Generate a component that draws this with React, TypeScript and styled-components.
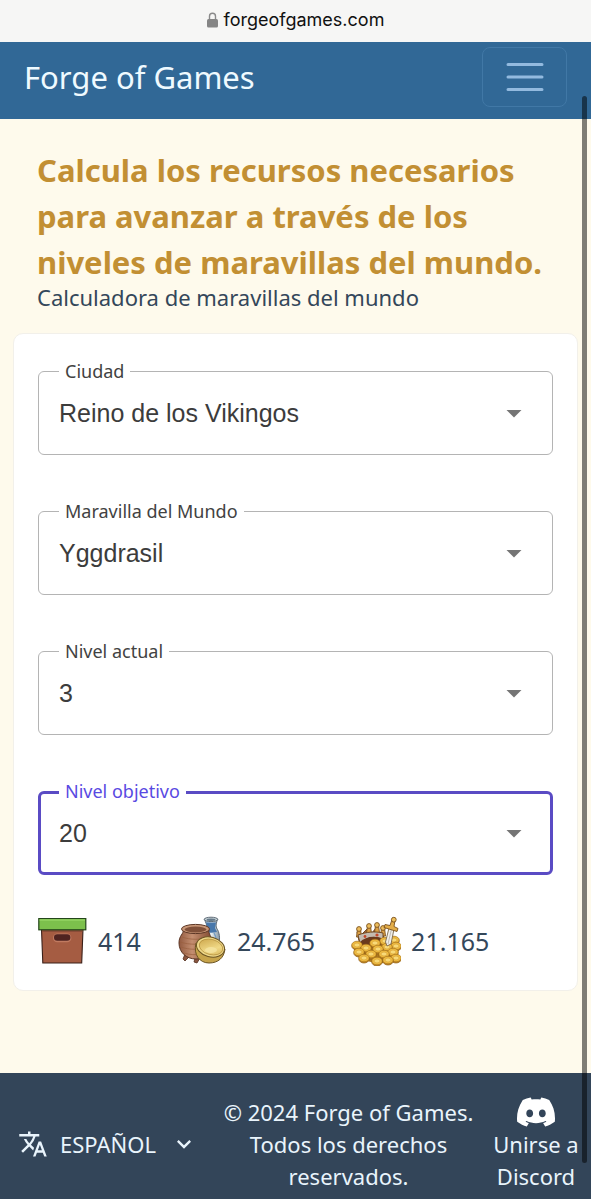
import React from "react";
import styled, { createGlobalStyle } from "styled-components";
import { MdArrowDropDown, MdExpandMore, MdTranslate } from "react-icons/md";
import { SiDiscord } from "react-icons/si";

const GlobalStyle = createGlobalStyle`
  *, *::before, *::after { box-sizing: border-box; }
  body {
    margin: 0;
    background: #fefaec;
    color: #34475a;
    font-family: "Noto Sans", sans-serif;
  }
`;

const Page = styled.div`
  min-height: 100vh;
  display: flex;
  flex-direction: column;
`;

const AddressBar = styled.div`
  height: 42px;
  display: flex;
  align-items: center;
  justify-content: center;
  gap: 6px;
  padding-bottom: 2px;
  background: #f6f6f5;
  color: #101010;
  font: 400 18px/24px Inter, sans-serif;
`;

const Navbar = styled.header`
  display: flex;
  align-items: center;
  justify-content: space-between;
  padding: 5px 24px 12px;
  background: #316896;
`;

const Brand = styled.a`
  color: #effaff;
  font-size: 31px;
  line-height: 44px;
  text-decoration: none;
`;

const Toggler = styled.button`
  display: grid;
  place-items: center;
  width: 85px;
  height: 60px;
  padding: 0;
  border: 1px solid #4178a6;
  border-radius: 8px;
  background: transparent;
  color: #93badf;
`;

const Main = styled.main`
  flex: 1;
  padding: 28px 13px;
`;

const Intro = styled.div`
  padding: 0 24px;
`;

const Title = styled.h1`
  margin: 0;
  color: #c28f33;
  font-size: 31px;
  line-height: 46px;
  font-weight: 700;
`;

const Subtitle = styled.p`
  margin: 0;
  font-size: 22px;
  line-height: 24px;
`;

const Card = styled.section`
  margin-top: 24px;
  padding: 37px 24px 24px;
  border: 1px solid #f2f0ea;
  border-radius: 10px;
  background: #fff;
`;

const Fields = styled.form`
  display: grid;
  gap: 56px;
`;

const Field = styled.div<{ $active?: boolean }>`
  position: relative;
  height: 84px;
  color: ${(p) => (p.$active ? "#594ae2" : "#424242")};

  &::after {
    content: "";
    position: absolute;
    inset: 0;
    border: ${(p) => (p.$active ? "3px solid #5a4bc4" : "1px solid #b4b4b4")};
    border-radius: 6px;
    pointer-events: none;
  }
`;

const FieldLabel = styled.label`
  position: absolute;
  z-index: 1;
  top: -12px;
  left: 21px;
  padding: 0 6px;
  background: #fff;
  font-size: 18px;
  line-height: 24px;
`;

const Select = styled.select`
  appearance: none;
  width: 100%;
  height: 100%;
  padding: 0 60px 0 21px;
  border: 0;
  outline: 0;
  background: transparent;
  color: #3c3c3c;
  font: 400 25px/32px "Liberation Sans", sans-serif;
`;

const Arrow = styled(MdArrowDropDown)`
  position: absolute;
  top: 24px;
  right: 21px;
  color: #757575;
  pointer-events: none;
`;

const Resources = styled.ul`
  display: flex;
  flex-wrap: wrap;
  gap: 16px 36px;
  margin: 41px 0 0;
  padding: 0;
  list-style: none;
`;

const Resource = styled.li`
  display: flex;
  align-items: center;
  gap: 10px;
  font-size: 25px;
  line-height: 32px;
`;

const Footer = styled.footer`
  display: flex;
  align-items: center;
  padding: 23px 10px 7px;
  background: #334559;
  color: #e9f4fc;
  font-size: 22px;
  line-height: 32px;
`;

const LanguageButton = styled.button`
  display: flex;
  align-items: center;
  gap: 12px;
  padding: 0 8px;
  border: 0;
  background: transparent;
  color: inherit;
  font: inherit;
  text-transform: uppercase;
`;

const Chevron = styled(MdExpandMore)`
  margin-left: 2px;
`;

const Copyright = styled.p`
  flex: 1;
  margin: 0;
  padding: 0 10px;
  text-align: center;
`;

const DiscordLink = styled.a`
  width: 90px;
  color: inherit;
  text-align: center;
  text-decoration: none;

  svg {
    display: block;
    margin: -3px auto;
    color: #fff;
  }
`;

const ScrollThumb = styled.div`
  position: fixed;
  z-index: 2;
  top: 96px;
  right: 4px;
  bottom: 36px;
  width: 5px;
  border-radius: 3px;
  background: rgba(0, 0, 0, 0.5);
`;

const LockIcon = () => (
  <svg width="11" height="16" viewBox="0 0 11 16" aria-hidden="true">
    <path d="M2.5 8V4.200a3 3 0 0 1 6 0V8" fill="none" stroke="#8a8a8a" strokeWidth="1.400" />
    <rect y="7" width="11" height="8.500" rx="1.500" fill="#858585" />
  </svg>
);

const MenuIcon = () => (
  <svg width="38" height="30" viewBox="0 0 38 30" aria-hidden="true">
    <path d="M2 2.500h34M2 15h34M2 27.500h34" stroke="currentColor" strokeWidth="3" strokeLinecap="round" />
  </svg>
);

const CrateIcon = () => (
  <svg width="50" height="50" viewBox="0 0 50 50" aria-hidden="true">
    <path d="M3.500 13h41.500l-1.300 34H4.800z" fill="#a55c42" stroke="#3a2019" strokeWidth="1.100" />
    <path d="M4.200 14h40.200v2H4.200z" fill="#8a4c38" />
    <rect x=".8" y="2.600" width="47" height="11.200" fill="#7cc04c" stroke="#23451a" strokeWidth="1.200" />
    <path d="M1.600 4h45.400" stroke="#94d463" strokeWidth="1.400" />
    <rect x="15" y="17.600" width="18.400" height="8.600" rx="4.300" fill="#c07a60" />
    <rect x="16" y="18.200" width="16.400" height="6.600" rx="3.300" fill="#4f2320" />
  </svg>
);

const PotteryIcon = () => (
  <svg width="50" height="50" viewBox="0 0 50 50" aria-hidden="true">
    <defs>
      <linearGradient id="clay" x1="0" x2="1">
        <stop offset="0" stopColor="#935a40" />
        <stop offset=".4" stopColor="#c48e70" />
        <stop offset="1" stopColor="#80492f" />
      </linearGradient>
      <linearGradient id="glaze" x1="0" x2="1">
        <stop offset="0" stopColor="#7fa3c4" />
        <stop offset=".5" stopColor="#e6eef0" />
        <stop offset="1" stopColor="#8496a4" />
      </linearGradient>
      <linearGradient id="brass" x1="0" y1="0" x2="1" y2="1">
        <stop offset="0" stopColor="#c9a145" />
        <stop offset=".6" stopColor="#f0d987" />
        <stop offset="1" stopColor="#d5b256" />
      </linearGradient>
    </defs>
    <path d="M27.500 3c1 4 3 6 2 9-2 4-4 8-3 17l15 1c2-8 1-14-2-18-1-3 0-5 1-9z" fill="url(#glaze)" stroke="#52606c" strokeWidth=".9" />
    <path d="M29 6.500h10l-1 5.500 2 4c-4 1-8 1-11 0l1.500-4z" fill="#4777ab" />
    <path d="M31 18c-1 3-1 5-1 8M37 17c2 3 2.500 6 2 9" fill="none" stroke="#739bc2" strokeWidth="1.300" />
    <ellipse cx="34" cy="3.400" rx="6.800" ry="2.200" fill="#c8d4d8" stroke="#52606c" strokeWidth=".9" />
    <ellipse cx="34" cy="3.700" rx="4.500" ry="1.200" fill="#65798a" />
    <path d="M8 38l-2 5 2 2 4-4zM18 42l-1 4 3 1 3-5z" fill="#8a5640" stroke="#54301f" strokeWidth=".8" />
    <path d="M6 14c1 4-4 5-4 13 0 9 7 16 17 16s16-7 16-16c0-7-4-9-3-13z" fill="url(#clay)" stroke="#5c3625" strokeWidth="1" />
    <path d="M5 21c8 3 19 3 28 0M3 26c9 3 22 3 31 0M4 31c8 3 18 3 28 0M7 37c6 2 12 2 17 1" fill="none" stroke="#99603f" strokeWidth=".7" />
    <ellipse cx="18.500" cy="13" rx="14" ry="4.600" fill="#c99878" stroke="#5c3625" strokeWidth="1" />
    <ellipse cx="18.500" cy="13.500" rx="11" ry="2.900" fill="#805039" />
    <path d="M19 27c-3 12 4 20 13 20 9 0 15-5 16-14z" fill="#c7a44b" stroke="#6b5423" strokeWidth="1" />
    <ellipse cx="33.500" cy="31" rx="14.300" ry="9.800" transform="rotate(15 33.500 31)" fill="#edd788" stroke="#6b5423" strokeWidth="1" />
    <ellipse cx="34" cy="31" rx="12" ry="7.600" transform="rotate(15 34 31)" fill="url(#brass)" stroke="#b38f3c" strokeWidth=".7" />
    <ellipse cx="34" cy="34" rx="6" ry="3" fill="#f6e7a6" opacity=".7" />
  </svg>
);

const crownPoints = [
  [8, 13],
  [18, 10],
  [26, 9],
  [32, 12],
];

const coins = [
  [43, 24], [45, 30], [34, 25], [24, 27], [6, 29], [36, 31], [15, 32], [27, 33],
  [8, 36], [42, 36], [33, 38], [20, 38], [45, 42], [13, 42], [37, 44], [26, 45],
];

const TreasureIcon = () => (
  <svg width="50" height="50" viewBox="0 0 50 50" aria-hidden="true">
    <path d="M3 29l8-4h31l6 6-2 12-18 5-16-4-9-10z" fill="#ad771f" />
    <path d="M6 16l4 3 6-6 4 5 5-6 3 6 5-3-1 13-9 3-14-2z" fill="#9c6538" stroke="#6b421c" strokeWidth=".9" />
    {crownPoints.map(([x, y]) => (
      <g key={x} stroke="#7b501d" strokeWidth=".9">
        <path d={`M${x - 1.5} ${y}l-1 8h5l-1-8z`} fill="#dba046" />
        <circle cx={x} cy={y} r="2.400" fill="#edbd5c" />
      </g>
    ))}
    <path d="M7 19c8-3 17-4 25-2v6c-8-3-16-2-23 4z" fill="#c4bbb0" stroke="#6b421c" strokeWidth=".9" />
    <path d="M9 26c5-5 15-7 22-3l-2 6-8 1-10-1z" fill="#6a3a1e" />
    <circle cx="14" cy="20.500" r="1.400" fill="#c4482c" />
    <circle cx="26" cy="19" r="1.600" fill="#c4482c" />
    {coins.map(([x, y]) => (
      <g key={`${x}-${y}`}>
        <ellipse cx={x} cy={y + 1} rx="5.200" ry="4" fill="#c98c22" stroke="#8a5a16" strokeWidth=".7" />
        <ellipse cx={x} cy={y} rx="5.200" ry="3.800" fill="#efbc42" stroke="#a06b18" strokeWidth=".6" />
        <ellipse cx={x} cy={y} rx="3" ry="2" fill="#f8da78" stroke="#d69a2c" strokeWidth=".6" />
      </g>
    ))}
    <path d="M38 12l5 1-3 15-4 2-1.500-4z" fill="#f0eeea" stroke="#7b6547" strokeWidth=".9" />
    <path d="M40.500 13l-3.500 15" stroke="#b5b0a8" strokeWidth=".8" />
    <path d="M34 8.500l5 1 2-6 3 1-1 6 4 2-1 3-13-4z" fill="#e3ad48" stroke="#7b501d" strokeWidth=".9" />
    <circle cx="42.800" cy="3.700" r="2.400" fill="#efc05a" stroke="#7b501d" strokeWidth=".9" />
  </svg>
);

const fields = [
  { id: "city", label: "Ciudad", value: "Reino de los Vikingos" },
  { id: "wonder", label: "Maravilla del Mundo", value: "Yggdrasil" },
  { id: "current", label: "Nivel actual", value: "3" },
  { id: "target", label: "Nivel objetivo", value: "20", active: true },
];

const resources = [
  { Icon: CrateIcon, amount: "414" },
  { Icon: PotteryIcon, amount: "24.765" },
  { Icon: TreasureIcon, amount: "21.165" },
];

export default function App() {
  return (
    <Page>
      <GlobalStyle />
      <AddressBar>
        <LockIcon />
        <span>forgeofgames.com</span>
      </AddressBar>
      <Navbar>
        <Brand href="#">Forge of Games</Brand>
        <Toggler type="button" aria-label="Menú">
          <MenuIcon />
        </Toggler>
      </Navbar>
      <Main>
        <Intro>
          <Title>Calcula los recursos necesarios para avanzar a través de los niveles de maravillas del mundo.</Title>
          <Subtitle>Calculadora de maravillas del mundo</Subtitle>
        </Intro>
        <Card>
          <Fields>
            {fields.map((f) => (
              <Field key={f.id} $active={f.active}>
                <FieldLabel htmlFor={f.id}>{f.label}</FieldLabel>
                <Select id={f.id} defaultValue={f.value}>
                  <option>{f.value}</option>
                </Select>
                <Arrow size={36} aria-hidden="true" />
              </Field>
            ))}
          </Fields>
          <Resources>
            {resources.map(({ Icon, amount }) => (
              <Resource key={amount}>
                <Icon />
                <span>{amount}</span>
              </Resource>
            ))}
          </Resources>
        </Card>
      </Main>
      <Footer>
        <LanguageButton type="button">
          <MdTranslate size={30} aria-hidden="true" />
          <span>Español</span>
          <Chevron size={28} aria-hidden="true" />
        </LanguageButton>
        <Copyright>© 2024 Forge of Games. Todos los derechos reservados.</Copyright>
        <DiscordLink href="#">
          <SiDiscord size={38} aria-hidden="true" />
          Unirse a Discord
        </DiscordLink>
      </Footer>
      <ScrollThumb />
    </Page>
  );
}
